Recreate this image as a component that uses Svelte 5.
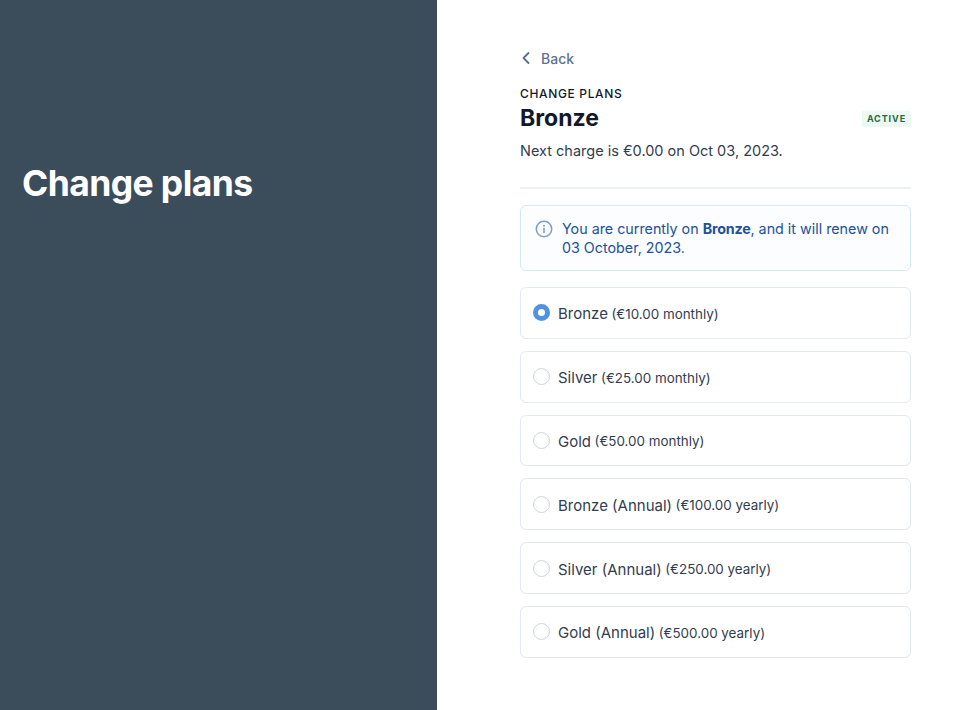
<script lang="ts">
  const plans = [
    { name: 'Bronze', price: '€10.00', period: 'monthly', selected: true },
    { name: 'Silver', price: '€25.00', period: 'monthly' },
    { name: 'Gold', price: '€50.00', period: 'monthly' },
    { name: 'Bronze (Annual)', price: '€100.00', period: 'yearly' },
    { name: 'Silver (Annual)', price: '€250.00', period: 'yearly' },
    { name: 'Gold (Annual)', price: '€500.00', period: 'yearly' }
  ];
</script>

<div class="page">
  <aside class="side">
    <h1>Change plans</h1>
  </aside>
  <main class="content">
    <div class="back">
      <svg width="12" height="14" viewBox="0 0 12 14" fill="none" aria-hidden="true">
        <path d="M8.5 2 L3.5 7 L8.5 12" stroke="#5b6f8c" stroke-width="1.8" stroke-linecap="round" stroke-linejoin="round" />
      </svg>
      <span>Back</span>
    </div>
    <div class="eyebrow">CHANGE PLANS</div>
    <div class="title-row">
      <h2>Bronze</h2>
      <span class="badge">ACTIVE</span>
    </div>
    <p class="next">Next charge is €0.00 on Oct 03, 2023.</p>
    <hr />
    <div class="notice">
      <svg class="info" width="18" height="18" viewBox="0 0 18 18" fill="none" aria-hidden="true">
        <circle cx="9" cy="9" r="7.7" stroke="#7f9cc6" stroke-width="1.5" />
        <circle cx="9" cy="5.8" r="1" fill="#7f9cc6" />
        <path d="M9 8.5 V12.4" stroke="#7f9cc6" stroke-width="1.6" stroke-linecap="round" />
      </svg>
      <p>You are currently on <strong>Bronze</strong>, and it will renew on 03 October, 2023.</p>
    </div>
    <div class="plans">
      {#each plans as plan (plan.name)}
        <div class="plan">
          <span class="radio" class:selected={plan.selected}></span>
          <span class="name">{plan.name}</span>
          <span class="price">({plan.price} {plan.period})</span>
        </div>
      {/each}
    </div>
  </main>
</div>

<style>
  :global(body) {
    margin: 0;
    background: #fff;
  }

  .page {
    display: flex;
    height: 710px;
    font-family: Inter, "Liberation Sans", sans-serif;
    color: #323c4f;
  }

  .side {
    width: 437px;
    flex: none;
    background: #3b4d5b;
    padding: 163px 0 0 22px;
    box-sizing: border-box;
  }

  h1 {
    margin: 0;
    font-size: 35.5px;
    line-height: 42px;
    font-weight: 700;
    letter-spacing: -0.6px;
    color: #fff;
  }

  .content {
    width: 391px;
    margin-left: 83px;
    padding-top: 49px;
  }

  .back {
    display: flex;
    align-items: center;
    gap: 9px;
    height: 18px;
    font-size: 14px;
    font-weight: 500;
    color: #5f7290;
  }

  .eyebrow {
    margin-top: 19px;
    font-size: 12px;
    line-height: 16px;
    font-weight: 500;
    letter-spacing: 0.65px;
    color: #12192b;
  }

  .title-row {
    display: flex;
    justify-content: space-between;
    align-items: center;
    height: 32px;
  }

  h2 {
    margin: 0;
    font-size: 23px;
    font-weight: 700;
    color: #12192b;
  }

  .badge {
    margin-top: 2px;
    padding: 0 5px;
    height: 16px;
    line-height: 16px;
    border-radius: 2px;
    background: #ecf8f1;
    color: #1f6b45;
    font-size: 9px;
    font-weight: 700;
    letter-spacing: 0.9px;
  }

  .next {
    margin: 7px 0 0;
    font-size: 14.5px;
    line-height: 20px;
  }

  hr {
    margin: 26px 0 16px;
    border: 0;
    height: 2px;
    background: #edf1f6;
  }

  .notice {
    display: flex;
    gap: 9px;
    padding: 13px 14px 0;
    height: 66px;
    box-sizing: border-box;
    border: 1px solid #d5e8f7;
    border-radius: 6px;
    background: #fbfdff;
    color: #20519b;
  }

  .info {
    flex: none;
    margin-top: 1px;
  }

  .notice p {
    margin: 0;
    font-size: 14.3px;
    line-height: 19px;
  }

  .notice strong {
    font-weight: 700;
    letter-spacing: -0.2px;
  }

  .plans {
    display: flex;
    flex-direction: column;
    gap: 12px;
    margin-top: 16px;
  }

  .plan {
    display: flex;
    align-items: center;
    height: 51.8px;
    box-sizing: border-box;
    padding: 2px 0 0 12px;
    border: 1px solid #e3e8f1;
    border-radius: 6px;
  }

  .radio {
    flex: none;
    width: 17px;
    height: 17px;
    margin: 0 8px 2px 0;
    box-sizing: border-box;
    border: 1.5px solid #ccd5e2;
    border-radius: 50%;
  }

  .radio.selected {
    border: 5px solid #4f93e0;
  }

  .name {
    font-size: 15px;
    margin-right: 3.5px;
  }

  .price {
    font-size: 13.4px;
  }
</style>
